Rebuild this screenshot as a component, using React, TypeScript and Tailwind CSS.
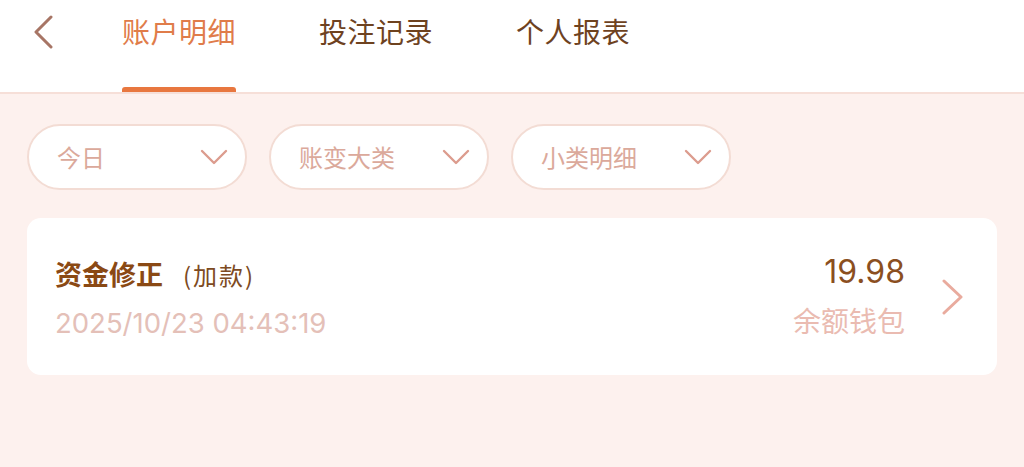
import React from 'react';

const font = "font-['Noto_Sans_CJK_SC','Noto_Sans',sans-serif]";

const tabs = ['账户明细', '投注记录', '个人报表'];
const filters = ['今日', '账变大类', '小类明细'];

const ChevronDown = () => (
  <svg width="28" height="18" viewBox="0 0 28 18" fill="none">
    <path d="M2 3l12 12L26 3" stroke="#dc9c8e" strokeWidth="2.4" strokeLinecap="round" strokeLinejoin="round" />
  </svg>
);

const App: React.FC = () => {
  return (
    <div className={`w-[1024px] h-[467px] bg-[#fdf1ee] overflow-hidden ${font}`}>
      {/* Header */}
      <div className="h-[94px] bg-white border-b-2 border-[#f6dfd8] flex items-start">
        <button className="w-[56px] h-[64px] pl-[32px] flex items-center">
          <svg width="22" height="34" viewBox="0 0 22 34" fill="none">
            <path d="M19 2L4 17l15 15" stroke="#a77565" strokeWidth="3" strokeLinecap="round" strokeLinejoin="round" />
          </svg>
        </button>
        <div className="flex ml-[66px] gap-[83px]">
          {tabs.map((t, i) => (
            <div key={t} className="relative h-[92px] flex flex-col">
              <span
                className={`mt-[11px] text-[28px] leading-[40px] tracking-[0.5px] ${
                  i === 0 ? 'text-[#e07c4a]' : 'text-[#6e421f]'
                }`}
              >
                {t}
              </span>
              {i === 0 && (
                <div className="absolute bottom-0 left-0 right-0 h-[5px] rounded-t-[3px] bg-[#e8773f]" />
              )}
            </div>
          ))}
        </div>
      </div>

      {/* Filters */}
      <div className="flex gap-[22px] px-[27px] pt-[30px]">
        {filters.map((f) => (
          <div
            key={f}
            className="w-[220px] h-[66px] rounded-full bg-white border-2 border-[#f3dcd4] flex items-center justify-between pl-[28px] pr-[17px]"
          >
            <span className="text-[24px] text-[#dba99b]">{f}</span>
            <ChevronDown />
          </div>
        ))}
      </div>

      {/* Record card */}
      <div className="mx-[27px] mt-[28px] h-[157px] bg-white rounded-[14px] flex items-center pl-[28px] pr-[32px]">
        <div className="flex-1 flex flex-col gap-[12px] mt-[4px]">
          <div className="flex items-baseline">
            <span className="text-[27px] font-bold text-[#8a4914] leading-[36px]">资金修正</span>
            <span className="text-[24px] text-[#7d4a22] ml-[20px] tracking-[2px]">(加款)</span>
          </div>
          <span className="text-[27.5px] text-[#e4c0b8] leading-[36px] font-['Inter',sans-serif]">
            2025/10/23 04:43:19
          </span>
        </div>
        <div className="flex flex-col items-end gap-[14px] mr-[36px] mb-[2px]">
          <span className="text-[32px] text-[#8b4f1f] leading-[34px] font-['Inter',sans-serif]">19.98</span>
          <span className="text-[28px] text-[#eabbb1] leading-[34px]">余额钱包</span>
        </div>
        <svg width="24" height="36" viewBox="0 0 24 36" fill="none">
          <path d="M3 2l17 16L3 34" stroke="#e9ab9e" strokeWidth="3" strokeLinecap="round" strokeLinejoin="round" />
        </svg>
      </div>
    </div>
  );
};

export default App;
